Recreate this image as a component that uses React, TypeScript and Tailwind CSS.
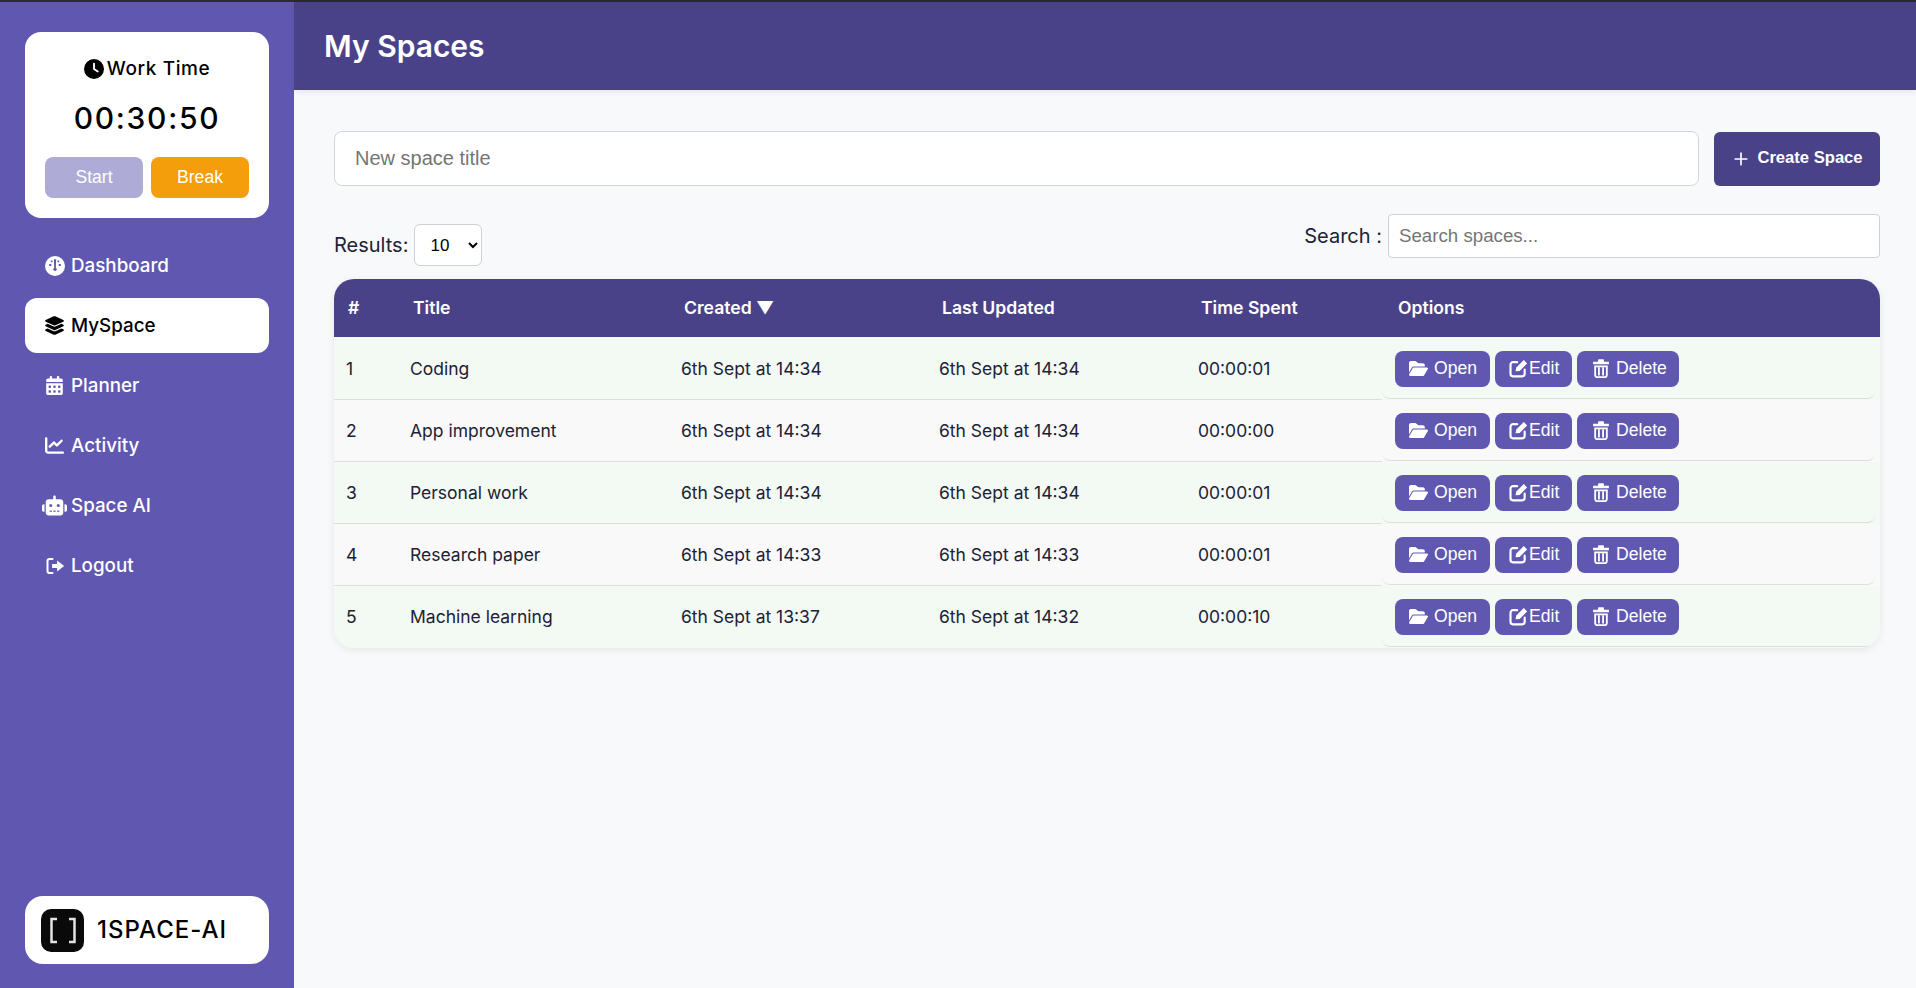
import React from 'react';
import { Plus } from 'lucide-react';
import { FaCalendarDays, FaChartLine, FaClock, FaFolderOpen, FaLayerGroup, FaRobot } from 'react-icons/fa6';

const inter = "font-['Inter',sans-serif]";
const arial = "font-['Liberation_Sans',Arial,sans-serif]";

const GaugeIcon = () => (
  <svg width="20" height="20" viewBox="0 0 24 24" className="shrink-0">
    <circle cx="12" cy="12" r="12" fill="currentColor" />
    <path d="M10.700 4H13.300L13 15H11Z M5 9.500h2.500v2.500H5Z M16.500 9.500H19v2.500h-2.500Z M7 5.500h2v2H7Z M15 5.500h2v2h-2Z" fill="#6058b0" />
    <circle cx="12" cy="16" r="2" fill="#6058b0" />
  </svg>
);

const LogoutIcon = () => (
  <svg width="20" height="20" viewBox="0 0 24 24" className="shrink-0">
    <path d="M9 3.500H5.500a2.500 2.500 0 0 0-2.500 2.500v12a2.500 2.500 0 0 0 2.500 2.500H9" fill="none" stroke="currentColor" strokeWidth="2.400" strokeLinecap="round" />
    <path d="M8.500 9.500H14.500V5.500L23 12L14.500 18.500V14.500H8.500Z" fill="currentColor" />
  </svg>
);

const EditIcon = () => (
  <svg width="20" height="20" viewBox="0 0 24 24" className="shrink-0 -translate-y-[1px]">
    <path d="M11 5H6a3 3 0 0 0-3 3v11a3 3 0 0 0 3 3h11a3 3 0 0 0 3-3v-5" fill="none" stroke="currentColor" strokeWidth="2.600" strokeLinecap="round" />
    <path d="M9 16L10 11.500L19 2.500L23 6.500L14 15.500Z" fill="currentColor" />
  </svg>
);

const TrashIcon = () => (
  <svg width="20" height="20" viewBox="0 0 24 24" className="shrink-0 -translate-y-[1px]">
    <path d="M8.500 4.500V2.500a1 1 0 0 1 1-1h5a1 1 0 0 1 1 1v2H21.500V7.500H2.500V4.500Z" fill="currentColor" />
    <path d="M5 10H19V20.500a2.500 2.500 0 0 1-2.500 2.500H7.500A2.500 2.500 0 0 1 5 20.500Z" fill="none" stroke="currentColor" strokeWidth="2.200" />
    <path d="M9.500 11V21M14.500 11V21" stroke="currentColor" strokeWidth="2.200" />
  </svg>
);

const navItems = [
  { label: 'Dashboard', icon: <GaugeIcon /> },
  { label: 'MySpace', icon: <FaLayerGroup size={21} className="shrink-0" />, active: true },
  { label: 'Planner', icon: <FaCalendarDays size={19} className="shrink-0" /> },
  { label: 'Activity', icon: <FaChartLine size={19} className="shrink-0" /> },
  { label: 'Space AI', icon: <FaRobot size={25} className="shrink-0" /> },
  { label: 'Logout', icon: <LogoutIcon /> },
];

const spaces = [
  { id: 1, title: 'Coding', created: '6th Sept at 14:34', updated: '6th Sept at 14:34', spent: '00:00:01' },
  { id: 2, title: 'App improvement', created: '6th Sept at 14:34', updated: '6th Sept at 14:34', spent: '00:00:00' },
  { id: 3, title: 'Personal work', created: '6th Sept at 14:34', updated: '6th Sept at 14:34', spent: '00:00:01' },
  { id: 4, title: 'Research paper', created: '6th Sept at 14:33', updated: '6th Sept at 14:33', spent: '00:00:01' },
  { id: 5, title: 'Machine learning', created: '6th Sept at 13:37', updated: '6th Sept at 14:32', spent: '00:00:10' },
];

const Sidebar = () => (
  <aside className="w-[294px] shrink-0 bg-[#6058b0] flex flex-col justify-between px-[25px] pt-[30px] pb-[24px]">
    <div>
      {/* Timer */}
      <div className="bg-white rounded-[16px] h-[186px] px-[20px] pt-[24px] flex flex-col items-center">
        <div className={`${inter} flex items-center gap-[3px] text-[19px] font-medium text-black tracking-[0.6px] leading-[26px]`}>
          <FaClock size={20} /> Work Time
        </div>
        <div className={`${inter} mt-[16px] text-[30px] font-medium text-black tracking-[1.7px] leading-[40px]`}>00:30:50</div>
        <div className={`${arial} mt-[19px] w-full grid grid-cols-2 gap-[8px] text-[17.6px] text-white`}>
          <button className="h-[41px] rounded-[8px] bg-[#afabd7]">Start</button>
          <button className="h-[41px] rounded-[8px] bg-[#f59e0b]">Break</button>
        </div>
      </div>

      {/* Nav */}
      <nav className={`${inter} mt-[20px] flex flex-col gap-[5px]`}>
        {navItems.map((item) => (
          <a
            key={item.label}
            className={`h-[55px] rounded-[12px] px-[20px] flex items-center gap-[7px] text-[18.8px] font-medium ${
              item.active ? 'bg-white text-black' : 'text-white'
            }`}
          >
            <span className="w-[19px] flex justify-center">{item.icon}</span>
            <span className="pt-[1px]">{item.label}</span>
          </a>
        ))}
      </nav>
    </div>

    {/* Logo */}
    <div className="bg-white rounded-[18px] h-[68px] px-[16px] flex items-center gap-[13px]">
      <svg width="43" height="43" viewBox="0 0 43 43">
        <rect width="43" height="43" rx="10" fill="#0a0a0a" />
        <path d="M16 10H10.500V33H16M28 10H33.500V33H28" fill="none" stroke="#e4e4e4" strokeWidth="2.500" />
      </svg>
      <span className={`${inter} text-[24px] font-medium text-black tracking-[1px]`}>1SPACE-AI</span>
    </div>
  </aside>
);

const ActionButton = ({ icon, label, className }: { icon: React.ReactNode; label: string; className: string }) => (
  <button className={`h-[36px] rounded-[8px] bg-[#6058b0] text-white flex items-center pb-[1px] ${className}`}>
    {icon}
    {label}
  </button>
);

const SpacesTable = () => (
  <div className="mt-[13px] rounded-[20px] shadow-[0_2px_8px_rgba(0,0,0,0.08)] overflow-hidden">
    <div className={`${inter} h-[58px] pt-[1px] bg-[#4a4289] text-white text-[17.6px] font-semibold grid grid-cols-[64px_271px_258px_259px_197px_1fr] items-center [&>div]:pl-[15px]`}>
      <div className="!pl-[14px]">#</div>
      <div>Title</div>
      <div>Created ▼</div>
      <div>Last Updated</div>
      <div>Time Spent</div>
      <div>Options</div>
    </div>
    {spaces.map((s, i) => (
      <div
        key={s.id}
        className={`${inter} ${i === 0 ? 'h-[63px]' : 'h-[62px]'} text-[17.5px] text-[#212135] grid grid-cols-[64px_271px_258px_259px_196px_1fr] ${
          i % 2 === 0 ? 'bg-[#f3f9f3]' : 'bg-[#f9f9f9]'
        } ${i === 0 ? '[&>div:not(:last-child)]:pt-[2px]' : '[&>div:not(:last-child)]:pt-[1px]'}`}
      >
        <div className={`flex items-center pl-[12px] ${i < 4 ? 'border-b border-[#dedede]' : ''}`}>{s.id}</div>
        <div className={`flex items-center pl-[12px] ${i < 4 ? 'border-b border-[#dedede]' : ''}`}>{s.title}</div>
        <div className={`flex items-center pl-[12px] ${i < 4 ? 'border-b border-[#dedede]' : ''}`}>{s.created}</div>
        <div className={`flex items-center pl-[12px] ${i < 4 ? 'border-b border-[#dedede]' : ''}`}>{s.updated}</div>
        <div className={`flex items-center pl-[12px] ${i < 4 ? 'border-b border-[#dedede]' : ''}`}>{s.spent}</div>
        <div className={`${arial} mr-[5px] mb-[1px] pl-[13px] ${i === 0 ? 'pt-[14px]' : 'pt-[13px]'} flex gap-[5px] text-[17.6px] border-b border-[#dedede] rounded-b-[8px]`}>
          <ActionButton className="w-[95px] pl-[14px] gap-[6px]" icon={<FaFolderOpen size={19} className="shrink-0" />} label="Open" />
          <ActionButton className="w-[77px] pl-[13px] gap-[1px]" icon={<EditIcon />} label="Edit" />
          <ActionButton className="w-[102px] pl-[14px] gap-[5px]" icon={<TrashIcon />} label="Delete" />
        </div>
      </div>
    ))}
  </div>
);

export default function App() {
  return (
    <div className="w-[1916px] h-[988px] overflow-hidden flex flex-col bg-[#f8f9fb]">
      <div className="h-[2px] bg-[#2b2b2b] shrink-0" />
      <div className="flex-1 flex min-h-0">
        <Sidebar />
        <main className="flex-1 min-w-0">
          <header className="h-[88px] bg-[#4a4289] shadow-[0_2px_6px_rgba(0,0,0,0.08)] px-[30px] flex items-center">
            <h1 className={`${inter} text-[30px] font-semibold text-white`}>My Spaces</h1>
          </header>

          <div className="pl-[40px] pr-[36px] pt-[41px]">
            <div className="flex gap-[15px] items-center">
              <input
                placeholder="New space title"
                className={`${arial} flex-1 h-[55px] rounded-[8px] border border-[#d1d5db] bg-white px-[20px] text-[20px] placeholder:text-[#757575] outline-none`}
              />
              <button className={`${arial} w-[166px] h-[54px] rounded-[6px] bg-[#4a4289] text-white text-[16.6px] font-bold flex items-center justify-center gap-[6px]`}>
                <Plus size={20} strokeWidth={2} /> Create Space
              </button>
            </div>

            <div className="mt-[28px] flex justify-between items-start">
              <div className={`${inter} mt-[10px] flex items-center gap-[6px] text-[20px] text-[#212135]`}>
                Results:
                <select className={`${arial} w-[68px] h-[42px] rounded-[6px] border border-[#cfcfcf] bg-white text-[17px] text-black pl-[11px]`}>
                  <option>10</option>
                  <option>25</option>
                  <option>50</option>
                </select>
              </div>
              <div className={`${inter} flex items-center gap-[6px] text-[20px] text-[#212135]`}>
                Search :
                <input
                  placeholder="Search spaces..."
                  className={`${arial} w-[492px] h-[44px] rounded-[4px] border border-[#cfcfcf] bg-white px-[10px] text-[18.7px] placeholder:text-[#757575] outline-none`}
                />
              </div>
            </div>

            <SpacesTable />
          </div>
        </main>
      </div>
    </div>
  );
}
